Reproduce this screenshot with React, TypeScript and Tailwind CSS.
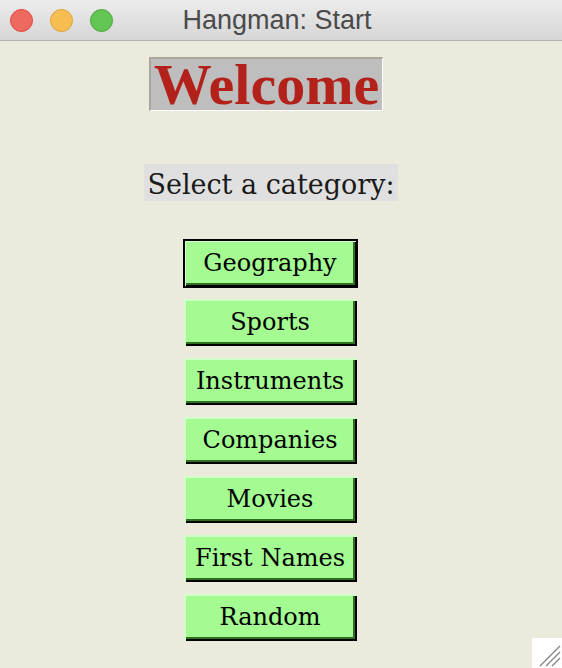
const categories = [
  'Geography',
  'Sports',
  'Instruments',
  'Companies',
  'Movies',
  'First Names',
  'Random',
];

function TitleBar() {
  return (
    <div className="relative flex h-[41px] items-center border-b border-[#b1b1b1] bg-gradient-to-b from-[#ececec] to-[#d6d6d6]">
      <div className="flex items-center gap-[17px] pl-[10px]">
        <span className="h-[23px] w-[23px] rounded-full border border-[#e0443e] bg-[#ee6a5f]" />
        <span className="h-[23px] w-[23px] rounded-full border border-[#dea236] bg-[#f6be50]" />
        <span className="h-[23px] w-[23px] rounded-full border border-[#4fa53a] bg-[#62c554]" />
      </div>
      <div
        className="absolute inset-0 flex items-center justify-center pr-[8px] text-[27px] text-[#4a4a4a]"
        style={{ fontFamily: '"Liberation Sans", Arial, sans-serif' }}
      >
        Hangman: Start
      </div>
    </div>
  );
}

function CategoryButton({ label, focused }: { label: string; focused?: boolean }) {
  return (
    <button
      type="button"
      className={
        'flex h-[47px] w-[173px] items-center justify-center bg-[#a3fb92] pb-[1px] text-[24px] text-black shadow-[inset_2px_2px_0_#d2ffc9,inset_-2px_-2px_0_#000,inset_-4px_-4px_0_#2f6f22] ' +
        (focused ? 'outline-2 outline-offset-[-1px] outline-black outline-solid' : '')
      }
    >
      {label}
    </button>
  );
}

export default function App() {
  return (
    <div className="relative h-[668px] w-[562px] overflow-hidden bg-[#ece9dd]">
      <TitleBar />
      <div
        className="flex flex-col items-center pr-[20px] pt-[16px]"
        style={{ fontFamily: '"DejaVu Serif", serif' }}
      >
        <div
          className="mr-[10px] flex h-[54px] items-center border-t-2 border-l-2 border-r border-b border-t-[#aaa699] border-l-[#aaa699] border-r-white border-b-white bg-[#bebebe] px-[3px] text-[58px] leading-none font-bold text-[#b3211b]"
          style={{ fontFamily: '"Liberation Serif", "Times New Roman", serif' }}
        >
          Welcome
        </div>
        <div className="mt-[53px] flex h-[37px] items-center bg-[#e0e0e0] px-[3px] pt-[3px] text-[27px] leading-none text-[#1a1a1a]">
          Select a category:
        </div>
        <div className="mt-[39px] mr-[2px] flex flex-col items-center gap-[12px]">
          {categories.map((c, i) => (
            <CategoryButton key={c} label={c} focused={i === 0} />
          ))}
        </div>
      </div>
      <div className="absolute right-0 bottom-0 h-[30px] w-[30px] bg-white">
        <svg width="30" height="30" viewBox="0 0 30 30">
          <g stroke="#8a8a8a" strokeWidth="1.5">
            <line x1="8" y1="28" x2="28" y2="8" />
            <line x1="14" y1="28" x2="28" y2="14" />
            <line x1="20" y1="28" x2="28" y2="20" />
          </g>
        </svg>
      </div>
    </div>
  );
}
